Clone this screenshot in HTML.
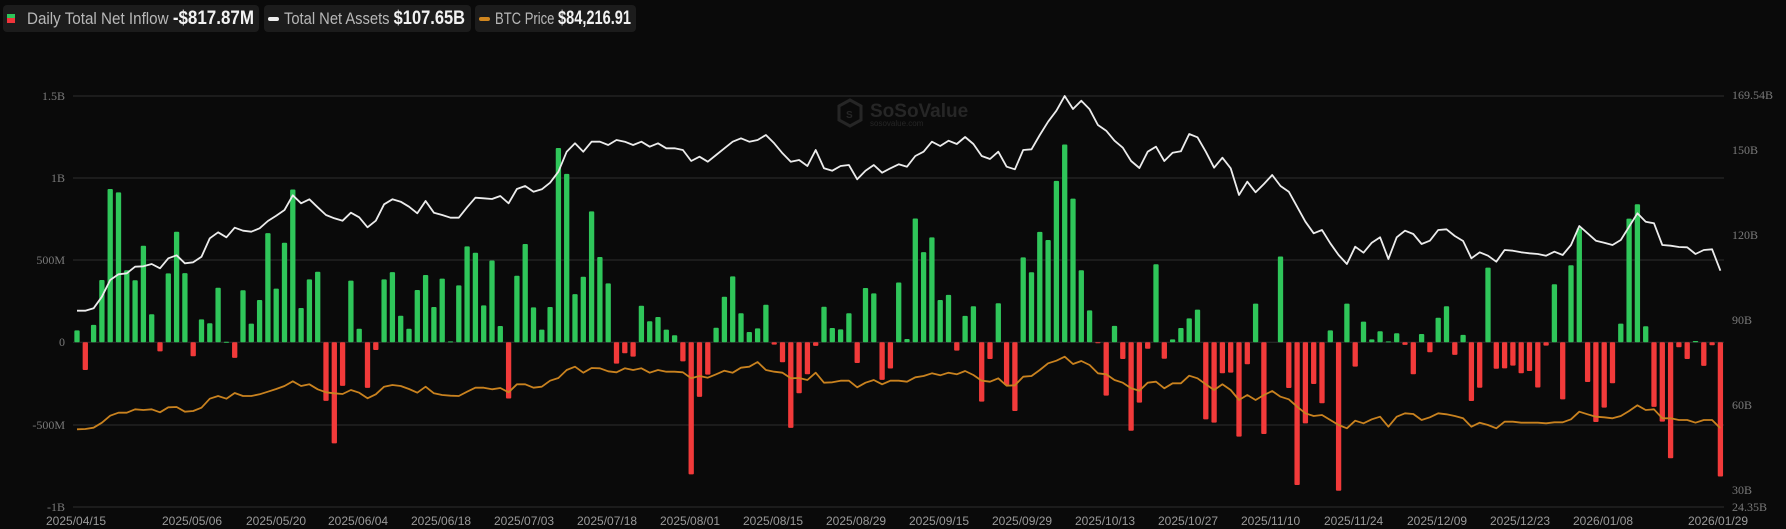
<!DOCTYPE html>
<html><head><meta charset="utf-8"><style>
html,body{margin:0;padding:0;background:#0a0a0a;width:1786px;height:529px;overflow:hidden;font-family:"Liberation Sans",sans-serif;}
.pill{position:absolute;top:5px;height:27px;background:#1c1c1c;border-radius:4px;color:#b8b8b8;font-size:17px;line-height:27px;white-space:nowrap;}
.pill b{color:#f2f2f2;font-size:19px;font-weight:bold;}
.t{position:absolute;top:0;transform-origin:0 50%;display:inline-block;}
</style></head><body>
<div class="pill" style="left:3px;width:256px;">
 <span style="position:absolute;left:4px;top:9px;width:8px;height:4px;background:#2ec45a"></span>
 <span style="position:absolute;left:4px;top:13px;width:8px;height:5px;background:#f0343a"></span>
 <span class="t" data-w="227" style="left:24px;">Daily Total Net Inflow <b>-$817.87M</b></span>
</div>
<div class="pill" style="left:264px;width:207px;">
 <span style="position:absolute;left:4px;top:12px;width:11px;height:4px;border-radius:2px;background:#eee"></span>
 <span class="t" data-w="181" style="left:20px;">Total Net Assets <b>$107.65B</b></span>
</div>
<div class="pill" style="left:475px;width:161px;">
 <span style="position:absolute;left:4px;top:12px;width:11px;height:4px;border-radius:2px;background:#d0861f"></span>
 <span class="t" data-w="136" style="left:20px;">BTC Price <b>$84,216.91</b></span>
</div>
<svg id="c" width="1786" height="529" style="position:absolute;left:0;top:0" xmlns="http://www.w3.org/2000/svg">
<g font-family="Liberation Serif,serif" font-size="12" fill="#7a7a7a">
<text x="65" y="100" text-anchor="end">1.5B</text>
<text x="65" y="182" text-anchor="end">1B</text>
<text x="65" y="264" text-anchor="end">500M</text>
<text x="65" y="346" text-anchor="end">0</text>
<text x="65" y="429" text-anchor="end">-500M</text>
<text x="65" y="511" text-anchor="end">-1B</text>
<text x="1732" y="99">169.54B</text>
<text x="1732" y="154">150B</text>
<text x="1732" y="239">120B</text>
<text x="1732" y="324">90B</text>
<text x="1732" y="409">60B</text>
<text x="1732" y="494">30B</text>
<text x="1732" y="511">24.35B</text>
</g>
<g font-family="Liberation Sans,sans-serif" font-size="12" fill="#9a9a9a">
<text x="46" y="525">2025/04/15</text><text x="162" y="525">2025/05/06</text><text x="246" y="525">2025/05/20</text>
<text x="328" y="525">2025/06/04</text><text x="411" y="525">2025/06/18</text><text x="494" y="525">2025/07/03</text>
<text x="577" y="525">2025/07/18</text><text x="660" y="525">2025/08/01</text><text x="743" y="525">2025/08/15</text>
<text x="826" y="525">2025/08/29</text><text x="909" y="525">2025/09/15</text><text x="992" y="525">2025/09/29</text>
<text x="1075" y="525">2025/10/13</text><text x="1158" y="525">2025/10/27</text><text x="1241" y="525">2025/11/10</text>
<text x="1324" y="525">2025/11/24</text><text x="1407" y="525">2025/12/09</text><text x="1490" y="525">2025/12/23</text>
<text x="1573" y="525">2026/01/08</text><text x="1688" y="525">2026/01/29</text>
</g>
<g fill="#262626">
<path d="M850 100 L861 106 L861 120 L850 126 L839 120 L839 106 Z" fill="none" stroke="#262626" stroke-width="3"/>
<text x="846" y="118" font-size="10" font-weight="bold" font-family="Liberation Sans,sans-serif">S</text>
<text x="870" y="117" font-size="19" font-weight="bold" font-family="Liberation Sans,sans-serif">SoSoValue</text>
<text x="870" y="126" font-size="8" font-family="Liberation Sans,sans-serif">sosovalue.com</text>
</g>
<g id="grid" stroke="#2e2e2e" stroke-width="1"></g>
<g id="bars"></g>
<g id="lines"></g>
</svg>
<script>
document.querySelectorAll('.t').forEach(function(s){var w=s.getBoundingClientRect().width;var t=+s.getAttribute('data-w');if(w>0)s.style.transform='scaleX('+(t/w)+')';});
var ns="http://www.w3.org/2000/svg";
function el(t,a,p){var e=document.createElementNS(ns,t);for(var k in a)e.setAttribute(k,a[k]);p.appendChild(e);return e;}
var grid=document.getElementById('grid');
[96,178,260,342.3,425,507].forEach(function(y){el('line',{x1:73,x2:1724,y1:y,y2:y},grid);});
var v=[73,-169,106,380,935,914,439,378,589,171,-55,420,674,422,-85,140,116,333,3,-95,317,114,258,666,327,607,932,209,384,430,-357,
-616,-266,376,83,-278,-47,384,428,162,83,319,410,215,388,6,347,585,546,225,499,99,-343,406,599,213,77,215,1185,1027,294,400,798,520,359,-130,-67,
-87,223,128,154,77,43,-116,-805,-333,-197,89,278,402,177,63,85,229,-14,-122,-522,-311,-195,-22,217,87,79,177,-126,331,298,-229,-160,365,20,755,550,
640,258,289,-51,161,220,-362,-102,238,-260,-419,518,427,673,624,984,1206,876,439,195,-6,-325,100,-102,-539,-368,-39,476,-100,18,87,146,199,-470,-490,-189,
-185,-575,-134,236,-559,0,523,-279,-870,-494,-254,-372,73,-905,236,-148,126,18,67,6,55,-16,-195,51,-61,150,220,-77,45,-358,-277,455,-161,-159,-142,-189,-175,-276,-20,354,-348,470,695,-242,-486,-398,-250,114,754,842,98,-394,-484,-707,-30,-102,8,-144,-18,-818];
var bars=document.getElementById('bars');
var Z=342.3,S=82/500;
v.forEach(function(m,i){if(m===0)return;var x=77+8.3*i-2.65;var h=Math.abs(m)*S;var y=m>0?Z-h:Z;
el('rect',{x:x.toFixed(2),y:y.toFixed(2),width:5.3,height:Math.max(h,1).toFixed(2),rx:1,fill:m>0?'#2fc65a':'#f23a3a'},bars);});
var W=[482,482,475,440,390,373,370,350,349,342,355,325,316,340,337,320,265,247,262,233,242,245,235,213,197,180,136,160,148,172,195,
205,212,188,202,232,212,163,148,155,170,190,153,188,195,203,203,172,143,145,147,138,160,117,108,125,118,98,65,5,-20,5,-25,-25,-15,-30,-25,
-15,-25,-10,-20,-5,-5,0,33,20,35,15,-5,-25,-35,-25,-30,-45,-20,10,35,30,48,0,55,62,48,45,88,62,45,68,55,43,50,18,5,
185,198,182,192,171,192,228,237,215,260,268,210,208,165,125,92,48,87,62,88,135,152,182,203,243,264,215,200,243,218,214,162,172,215,263,233,
265,345,305,337,312,285,318,335,380,425,460,450,490,525,552,500,518,488,472,537,472,452,462,492,482,450,448,468,483,535,517,
527,545,510,512,517,520,522,527,515,525,495,438,460,482,488,495,480,440,400,425,430,495,497,501,502,522,510,508,572];
var O=[838,837,833,818,797,788,788,778,780,778,787,772,771,785,783,773,746,738,746,729,738,738,733,725,717,708,694,708,703,718,727,
730,732,720,728,745,733,710,705,708,717,728,710,730,735,737,738,725,713,713,718,714,727,703,703,713,710,692,684,660,650,668,654,655,664,667,655,
660,655,668,660,665,665,667,685,678,683,673,662,668,653,650,636,660,665,668,685,684,690,668,698,697,692,692,712,698,690,703,692,692,695,682,678,
880,886,878,883,873,885,902,905,895,917,916,890,888,870,850,842,830,852,843,855,880,883,900,908,925,932,908,905,925,910,910,887,895,913,930,913,
930,960,945,960,945,933,950,958,980,1000,1008,1005,1020,1035,1045,1022,1030,1018,1010,1040,1010,1000,1002,1020,1012,1000,1003,1008,1015,1040,1028,
1035,1045,1025,1025,1028,1028,1028,1030,1027,1027,1018,995,1003,1010,1012,1015,1008,993,976,990,988,1015,1015,1020,1020,1028,1020,1020,1045];
function pts(a){return a.map(function(z,i){var off=i<103?150:80;return (77+8.3*i).toFixed(1)+','+(off+z/3).toFixed(1);}).join(' ');}
var L=document.getElementById('lines');
el('polyline',{points:pts(O),fill:'none',stroke:'#c9821f','stroke-width':1.8,'stroke-linejoin':'round'},L);
el('polyline',{points:pts(W),fill:'none',stroke:'#ececec','stroke-width':1.8,'stroke-linejoin':'round'},L);
</script>
</body></html>
